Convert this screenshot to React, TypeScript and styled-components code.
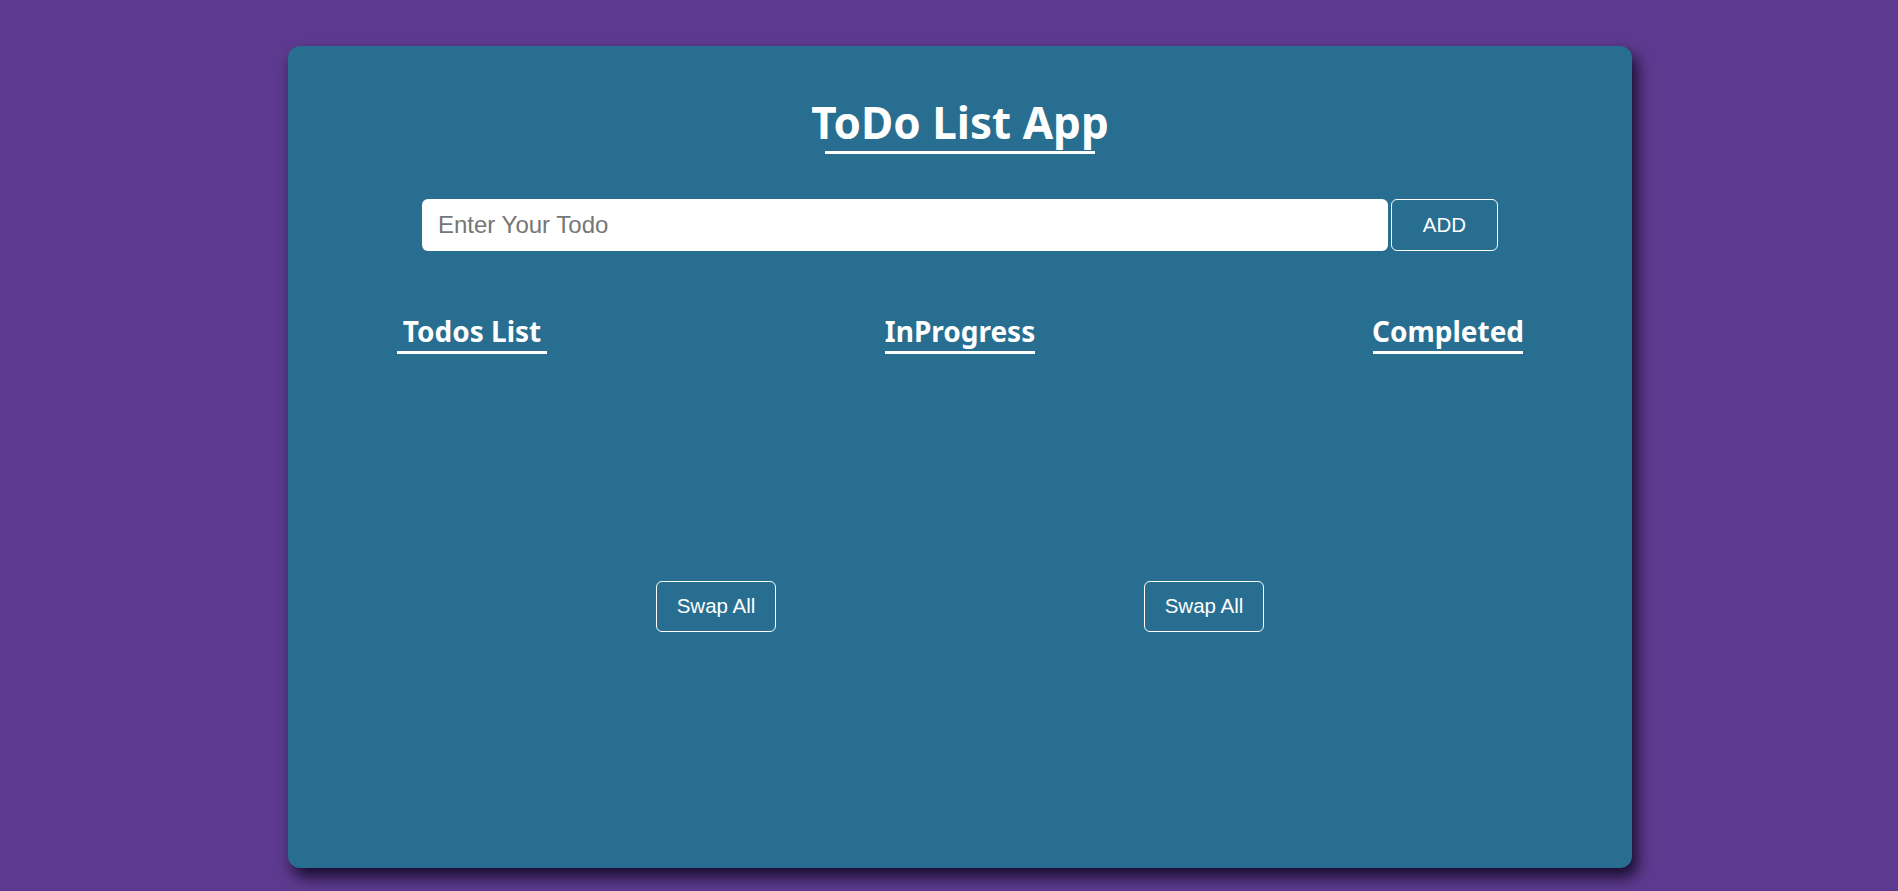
import React, { useState } from "react";
import styled, { createGlobalStyle } from "styled-components";

const GlobalStyle = createGlobalStyle`
  html, body {
    margin: 0;
    padding: 0;
    background: #5d3a8f;
    height: 100%;
    overflow: hidden;
  }
  * { box-sizing: border-box; }
`;

const Page = styled.div`
  min-height: 100vh;
  padding: 46px 0 0 22px;
  background: #5d3a8f;
`;

const Card = styled.main`
  width: 1344px;
  height: 822px;
  margin: 0 auto;
  padding-top: 49px;
  background: #276e91;
  border-radius: 12px;
  box-shadow: 5px 9px 15px rgba(5, 0, 20, 0.8);
  font-family: "Noto Sans", "Open Sans", sans-serif;
  color: #ffffff;
`;

const Title = styled.h1`
  margin: 0;
  font-size: 44px;
  line-height: 54px;
  font-weight: 700;
  text-align: center;
  &::after {
    content: "";
    display: block;
    width: 270px;
    height: 3px;
    margin: 2px auto 0;
    background: #ffffff;
  }
`;

const Form = styled.form`
  display: flex;
  justify-content: center;
  gap: 3px;
  margin-top: 45px;
`;

const Input = styled.input`
  width: 966px;
  height: 52px;
  padding: 0 16px;
  border: none;
  border-radius: 6px;
  background: #ffffff;
  font-family: "Liberation Sans", Arial, sans-serif;
  font-size: 24px;
  color: #333;
  outline: none;
  &::placeholder {
    color: #767676;
  }
`;

const OutlineButton = styled.button<{ $w: number; $h: number }>`
  width: ${(p) => p.$w}px;
  height: ${(p) => p.$h}px;
  padding: 0;
  border: 1px solid #ffffff;
  border-radius: 6px;
  background: transparent;
  color: #ffffff;
  font-family: "Liberation Sans", Arial, sans-serif;
  font-size: 20.5px;
  cursor: pointer;
  flex-shrink: 0;
`;

const Board = styled.section`
  display: flex;
  justify-content: space-evenly;
  align-items: center;
  height: 590px;
  margin-top: 60px;
`;

const Column = styled.div`
  width: 150px;
  height: 100%;
  display: flex;
  flex-direction: column;
  align-items: center;
`;

const Heading = styled.h2`
  margin: 0;
  font-size: 28px;
  line-height: 40px;
  font-weight: 700;
  white-space: nowrap;
  text-align: center;
  &::after {
    content: "";
    display: block;
    width: 150px;
    height: 3px;
    margin: 0 auto;
    background: #ffffff;
  }
`;

export default function App() {
  const [todo, setTodo] = useState("");
  return (
    <>
      <GlobalStyle />
      <Page>
        <Card>
          <Title>ToDo List App</Title>
          <Form onSubmit={(e) => e.preventDefault()}>
            <Input
              placeholder="Enter Your Todo"
              value={todo}
              onChange={(e) => setTodo(e.target.value)}
            />
            <OutlineButton type="submit" $w={107} $h={52}>
              ADD
            </OutlineButton>
          </Form>
          <Board>
            <Column>
              <Heading>Todos List</Heading>
            </Column>
            <OutlineButton $w={120} $h={51}>Swap All</OutlineButton>
            <Column>
              <Heading>InProgress</Heading>
            </Column>
            <OutlineButton $w={120} $h={51}>Swap All</OutlineButton>
            <Column>
              <Heading>Completed</Heading>
            </Column>
          </Board>
        </Card>
      </Page>
    </>
  );
}
